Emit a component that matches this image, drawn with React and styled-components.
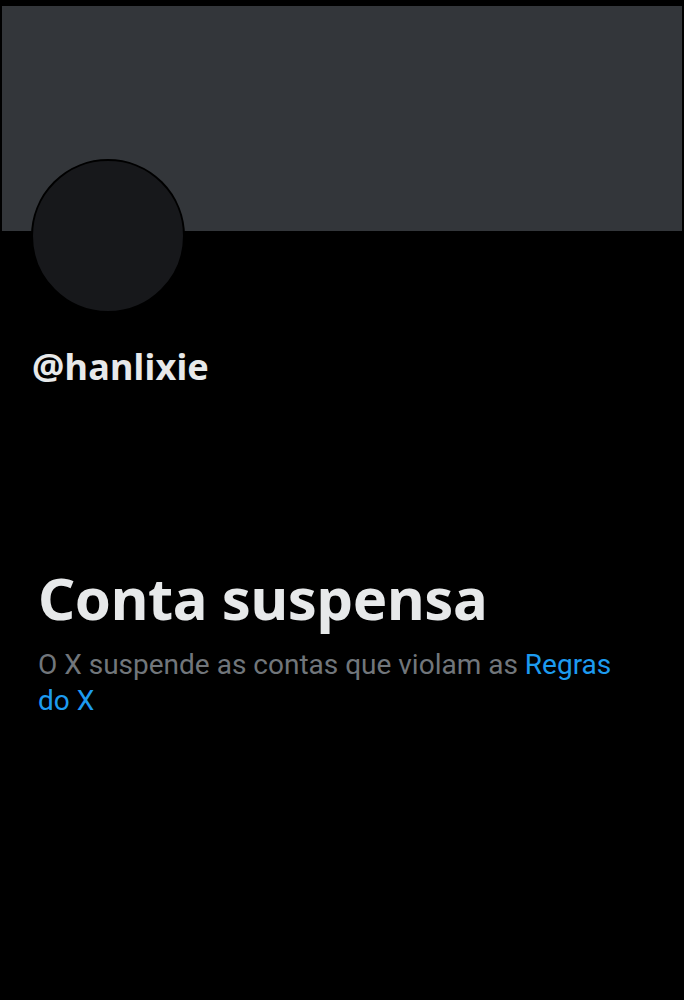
import React from 'react'
import styled, { createGlobalStyle } from 'styled-components'

const GlobalStyle = createGlobalStyle`
    html, body {
        margin: 0;
        padding: 0;
        background: #000;
    }
    body {
        font-family: Roboto, "Noto Sans", "Liberation Sans", sans-serif;
        color: #e7e9ea;
    }
`

const Page = styled.div`
    width: 684px;
    min-height: 1000px;
    background: #000;
    padding-top: 6px;
    box-sizing: border-box;
`

const Banner = styled.div`
    height: 225px;
    margin: 0 2px;
    background: #33363a;
`

const ProfileHead = styled.div`
    padding: 0 31px;
    margin-top: -72px;
`

const Avatar = styled.div`
    width: 150px;
    height: 150px;
    border-radius: 50%;
    background: #17181b;
    border: 2px solid #000;
`

const Handle = styled.h2`
    margin: 32px 0 0 1px;
    font-family: "Noto Sans", Roboto, sans-serif;
    font-size: 36px;
    font-weight: 700;
    line-height: 44px;
    letter-spacing: 0.2px;
    color: #e7e9ea;
`

const Notice = styled.section`
    padding: 0 38px;
    margin-top: 169px;
`

const Title = styled.h1`
    margin: 0;
    font-family: "Noto Sans", Roboto, sans-serif;
    font-size: 58px;
    font-weight: 700;
    line-height: 80px;
    letter-spacing: -0.4px;
    color: #e7e9ea;
`

const Desc = styled.p`
    margin: 9px 0 0;
    font-size: 28px;
    line-height: 36px;
    color: #71767b;
`

const RulesLink = styled.a`
    color: #1d9bf0;
    text-decoration: none;
`

const App = () => {
    return (
        <Page>
            <GlobalStyle />
            <Banner />
            <ProfileHead>
                <Avatar />
                <Handle>@hanlixie</Handle>
            </ProfileHead>
            <Notice>
                <Title>Conta suspensa</Title>
                <Desc>
                    O X suspende as contas que violam as <RulesLink href="#">Regras do X</RulesLink>
                </Desc>
            </Notice>
        </Page>
    )
}

export default App
